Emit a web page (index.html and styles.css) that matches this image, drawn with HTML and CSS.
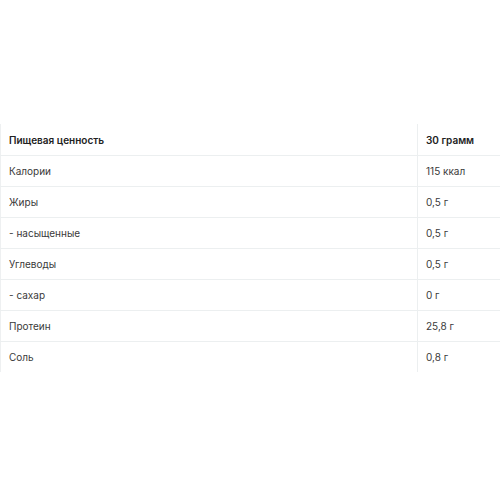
FILE: index.html
```html
<!DOCTYPE html>
<html>
<head>
<meta charset="utf-8">
<link rel="stylesheet" href="styles.css">
</head>
<body>
<table class="nutrition">
  <thead>
    <tr><th>Пищевая ценность</th><th>30 грамм</th></tr>
  </thead>
  <tbody>
    <tr><td>Калории</td><td>115 ккал</td></tr>
    <tr><td>Жиры</td><td>0,5 г</td></tr>
    <tr><td>- насыщенные</td><td>0,5 г</td></tr>
    <tr><td>Углеводы</td><td>0,5 г</td></tr>
    <tr><td>- сахар</td><td>0 г</td></tr>
    <tr><td>Протеин</td><td>25,8 г</td></tr>
    <tr><td>Соль</td><td>0,8 г</td></tr>
  </tbody>
</table>
</body>
</html>
```
FILE: styles.css
```css
html, body {
  margin: 0;
  padding: 0;
  background: #fff;
}
body {
  font-family: Inter, "Noto Sans", sans-serif;
  font-size: 10px;
  color: #3a3a3a;
}
.nutrition {
  margin-top: 124px;
  width: 100%;
  border-collapse: collapse;
  border-left: 1px solid #eef0f1;
}
.nutrition th,
.nutrition td {
  height: 30px;
  padding: 0 8px;
  text-align: left;
  vertical-align: middle;
  border-bottom: 1px solid #eceff0;
}
.nutrition th {
  font-weight: 600;
  color: #222;
  height: 31px;
}
.nutrition tr > :first-child {
  width: 400px;
  border-right: 1px solid #eceff0;
}
.nutrition tbody tr:last-child td {
  border-bottom: none;
}
```
